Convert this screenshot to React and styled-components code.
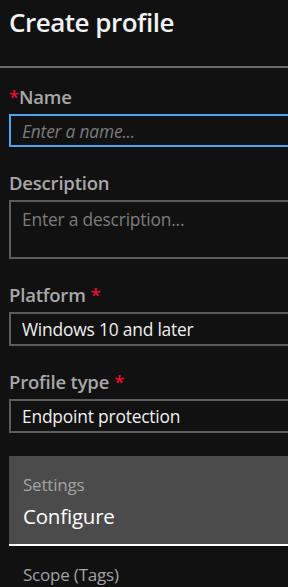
import styled, { createGlobalStyle } from 'styled-components';

const GlobalStyle = createGlobalStyle`
  html, body {
    margin: 0;
    padding: 0;
    background: #111111;
  }
  body {
    font-family: "Open Sans", "Noto Sans", sans-serif;
    overflow: hidden;
  }
`;

const Page = styled.div`
  width: 288px;
  height: 587px;
  overflow: hidden;
  background: #111111;
`;

const Title = styled.h1`
  margin: 0;
  padding: 4px 0 0 9px;
  font-size: 26px;
  line-height: 36px;
  font-weight: 600;
  color: #f2f2f2;
  letter-spacing: -0.5px;
`;

const Divider = styled.hr`
  margin: 26px 0 0;
  border: none;
  height: 2px;
  background: #6a6a6a;
`;

const Form = styled.div`
  width: 360px;
  padding: 17px 0 0 9px;
  display: flex;
  flex-direction: column;
  gap: 24px;
`;

const Field = styled.div`
  display: flex;
  flex-direction: column;
  gap: 5px;
`;

const Label = styled.div`
  font-size: 18.5px;
  line-height: 24px;
  font-weight: 600;
  color: #a8a8a8;
  letter-spacing: -0.2px;
`;

const Star = styled.span`
  color: #e8112d;
  font-weight: 600;
  margin: ${(p) => (p.$before ? '0' : '0 0 0 5px')};
`;

const Box = styled.div`
  box-sizing: border-box;
  height: ${(p) => p.$h}px;
  border: 2px solid ${(p) => (p.$focus ? '#4aa7ef' : '#5c5c5c')};
  padding: ${(p) => (p.$tall ? '5px 11px' : '0 11px')};
  display: flex;
  align-items: ${(p) => (p.$tall ? 'flex-start' : 'center')};
  font-size: 17.4px;
  color: ${(p) => (p.$value ? '#f0f0f0' : '#7c7c7c')};
  font-style: ${(p) => (p.$italic ? 'italic' : 'normal')};
  letter-spacing: -0.2px;
`;

const Step = styled.div`
  margin: 23px 0 0 9px;
  width: 340px;
  box-sizing: border-box;
  height: 90px;
  background: #4b4b4b;
  border-bottom: 2px solid #ffffff;
  padding: 19px 0 0 14px;
`;

const StepSmall = styled.div`
  font-size: 17px;
  line-height: 20px;
  color: #a4a4a4;
  letter-spacing: -0.2px;
`;

const StepBig = styled.div`
  margin-top: 8px;
  font-size: 20.5px;
  line-height: 26px;
  color: #ffffff;
  letter-spacing: -0.2px;
`;

const NextStep = styled.div`
  padding: 19px 0 0 23px;
  font-size: 17px;
  line-height: 20px;
  color: #a4a4a4;
  letter-spacing: -0.2px;
`;

export default function App() {
  return (
    <Page>
      <GlobalStyle />
      <Title>Create profile</Title>
      <Divider />
      <Form>
        <Field>
          <Label>
            <Star $before>*</Star>Name
          </Label>
          <Box $h={33} $focus $italic>
            Enter a name...
          </Box>
        </Field>
        <Field>
          <Label>Description</Label>
          <Box $h={59} $tall>
            Enter a description...
          </Box>
        </Field>
        <Field>
          <Label>
            Platform<Star>*</Star>
          </Label>
          <Box $h={34} $value>
            Windows 10 and later
          </Box>
        </Field>
        <Field>
          <Label>
            Profile type<Star>*</Star>
          </Label>
          <Box $h={34} $value>
            Endpoint protection
          </Box>
        </Field>
      </Form>
      <Step>
        <StepSmall>Settings</StepSmall>
        <StepBig>Configure</StepBig>
      </Step>
      <NextStep>Scope (Tags)</NextStep>
    </Page>
  );
}
